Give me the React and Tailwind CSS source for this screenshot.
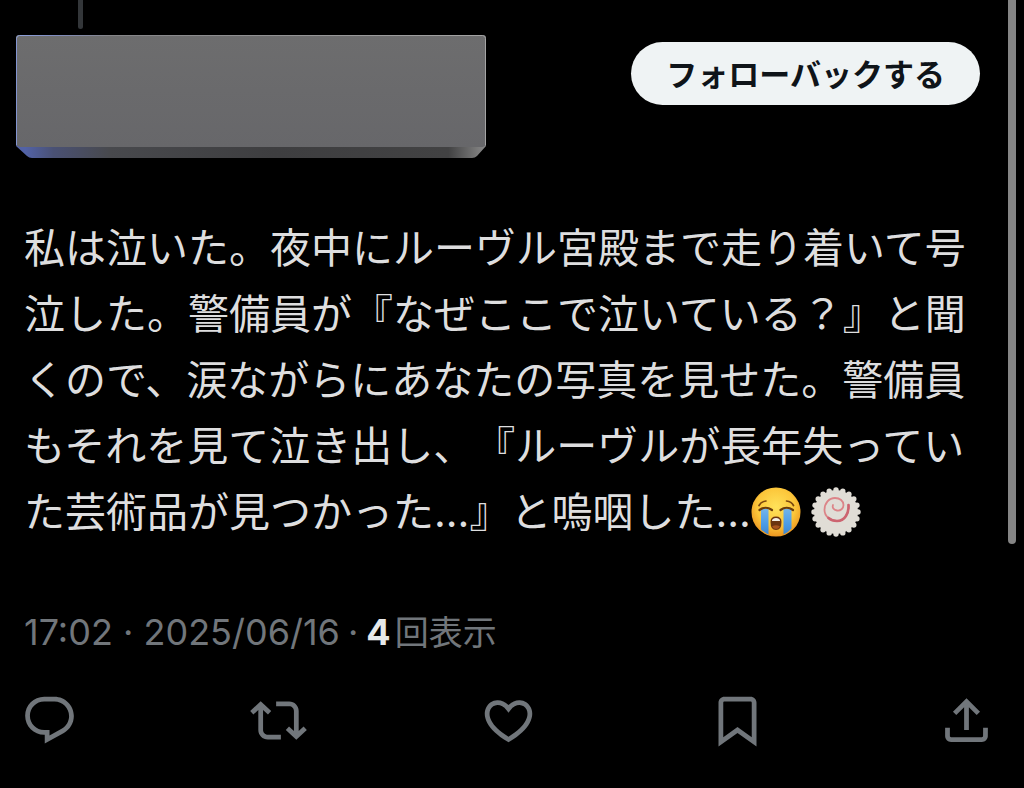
const FONT = "font-['Inter','Noto_Sans_CJK_JP',sans-serif]"

const BODY = '私は泣いた。夜中にルーヴル宮殿まで走り着いて号泣した。警備員が『なぜここで泣いている？』と聞くので、涙ながらにあなたの写真を見せた。警備員もそれを見て泣き出し、『ルーヴルが長年失っていた芸術品が見つかった...』と嗚咽した...'

const ACTIONS = [
  { label: '返信', d: 'M1.751 10c0-4.42 3.584-8 8.005-8h4.366c4.49 0 8.129 3.64 8.129 8.13 0 2.96-1.607 5.68-4.196 7.11l-8.054 4.46v-3.69h-.067c-4.49.1-8.183-3.51-8.183-8.01zm8.005-6c-3.317 0-6.005 2.69-6.005 6 0 3.37 2.77 6.08 6.138 6.01l.351-.01h1.761v2.3l5.087-2.81c1.951-1.08 3.163-3.13 3.163-5.36 0-3.39-2.744-6.13-6.129-6.13H9.756z' },
  { label: 'リポスト', d: 'M4.5 3.88l4.432 4.14-1.364 1.46L5.5 7.55V16c0 1.1.896 2 2 2H13v2H7.5c-2.209 0-4-1.79-4-4V7.55L1.432 9.48.068 8.02 4.5 3.88zM16.5 6H11V4h5.5c2.209 0 4 1.79 4 4v8.45l2.068-1.93 1.364 1.46-4.432 4.14-4.432-4.14 1.364-1.46 2.068 1.93V8c0-1.1-.896-2-2-2z' },
  { label: 'いいね', d: 'M16.697 5.5c-1.222-.06-2.679.51-3.89 2.16l-.805 1.09-.806-1.09C9.984 6.01 8.526 5.44 7.304 5.5c-1.243.07-2.349.78-2.91 1.91-.552 1.12-.633 2.78.479 4.82 1.074 1.97 3.257 4.27 7.129 6.61 3.87-2.34 6.052-4.64 7.126-6.61 1.111-2.04 1.03-3.7.477-4.82-.561-1.13-1.666-1.84-2.908-1.91zm4.187 7.69c-1.351 2.48-4.001 5.12-8.379 7.67l-.503.3-.504-.3c-4.379-2.55-7.029-5.19-8.382-7.67-1.36-2.5-1.41-4.86-.514-6.67.887-1.79 2.647-2.91 4.601-3.01 1.651-.09 3.368.56 4.798 2.01 1.429-1.45 3.146-2.1 4.796-2.01 1.954.1 3.714 1.22 4.601 3.01.896 1.81.846 4.17-.514 6.67z' },
  { label: 'ブックマーク', d: 'M4 4.5C4 3.12 5.119 2 6.5 2h11C18.881 2 20 3.12 20 4.5v18.44l-8-5.71-8 5.71V4.5zM6.5 4c-.276 0-.5.22-.5.5v14.56l6-4.29 6 4.29V4.5c0-.28-.224-.5-.5-.5h-11z' },
  { label: '共有', d: 'M12 2.59l5.7 5.7-1.41 1.42L13 6.41V16h-2V6.41l-3.3 3.3-1.41-1.42L12 2.59zM21 15l-.02 3.51c0 1.38-1.12 2.49-2.5 2.49H5.5C4.11 21 3 19.88 3 18.5V15h2v3.5c0 .28.22.5.5.5h12.98c.28 0 .5-.22.5-.5L19 15h2z' },
]

// アカウント名を隠している立体ブロック
function HiddenAccount() {
  return (
    <svg viewBox="0 0 470 124" className="h-[124px] w-[470px]" aria-hidden="true">
      <defs>
        <linearGradient id="face" x1="0" y1="0" x2="0" y2="1">
          <stop offset="0" stopColor="#6d6d6e" />
          <stop offset="1" stopColor="#67676a" />
        </linearGradient>
        <linearGradient id="lip" x1="0" y1="0" x2="1" y2="0">
          <stop offset="0.02" stopColor="#5262a6" />
          <stop offset="0.08" stopColor="#4a5174" />
          <stop offset="0.2" stopColor="#48494d" />
          <stop offset="0.55" stopColor="#3e3e40" />
          <stop offset="0.92" stopColor="#424243" />
          <stop offset="1" stopColor="#8a8a8a" />
        </linearGradient>
        <linearGradient id="edge" x1="0" y1="0" x2="1" y2="0">
          <stop offset="0" stopColor="#8fa3dc" />
          <stop offset="0.08" stopColor="#7f8cc0" />
          <stop offset="0.2" stopColor="#858588" />
          <stop offset="1" stopColor="#a4a4a4" />
        </linearGradient>
      </defs>
      <path d="M0 108h470v3l-9 10q-2 2-5 2H16q-3 0-5-2L0 111z" fill="url(#lip)" />
      <path d="M3 0h464q3 0 3 3v107l-3 2H4l-4-2V3q0-3 3-3z" fill="url(#face)" />
      <path d="M.5 110V3.5q0-3 3-3h463q3 0 3 3V110" fill="none" stroke="url(#edge)" />
      <path d="M.5 110V4" fill="none" stroke="#8294d0" />
    </svg>
  )
}

function CryingFace() {
  return (
    <svg viewBox="0 0 50 50" className="inline-block size-[50px] align-[-10px]" role="img" aria-label="😭">
      <defs>
        <radialGradient id="skin" cx="0.5" cy="0.4" r="0.6">
          <stop offset="0" stopColor="#ffe25a" />
          <stop offset="0.65" stopColor="#fcc63a" />
          <stop offset="1" stopColor="#ec9620" />
        </radialGradient>
        <linearGradient id="tear" x1="0" y1="0" x2="0" y2="1">
          <stop offset="0" stopColor="#72b4ea" />
          <stop offset="0.6" stopColor="#4a9be6" />
          <stop offset="1" stopColor="#3f86cf" />
        </linearGradient>
      </defs>
      <circle cx="25" cy="25" r="24.5" fill="url(#skin)" />
      <path d="M10 22h7.500v25.500q-4-2-7.500-5zM32.500 22h8v19.500q-3.500 4-8 6z" fill="url(#tear)" />
      <path d="M8 18.500q2-4 7-4.500M42.500 18.500q-2-4-7-4.500" fill="none" stroke="#7a470f" strokeWidth="1.700" strokeLinecap="round" />
      <path d="M8.500 23q6-4.500 12.500 0M29.500 23q6-4.500 12.500 0" fill="none" stroke="#6b3d0c" strokeWidth="2.200" strokeLinecap="round" />
      <path d="M19.500 35q0-5.500 5.500-5.500t5.500 5.500q0 8-5.500 8t-5.500-8z" fill="#6b3410" />
      <path d="M21 33.500q.5-2.500 4-2.500t4 2.500v.5h-8z" fill="#f4efe6" />
      <path d="M21 39.500q4-2.500 8 0-1.500 2.500-4 2.500t-4-2.500z" fill="#a8541e" />
    </svg>
  )
}

function FishCake() {
  const bumps = Array.from({ length: 20 }, (_, i) => (i * Math.PI) / 10)
  return (
    <svg viewBox="0 0 50 50" className="ml-[10px] inline-block size-[50px] align-[-10px]" role="img" aria-label="🍥">
      <g fill="#e0ddd6">
        <circle cx="25" cy="25" r="22" />
        {bumps.map((a) => (
          <circle key={a} cx={25 + 22 * Math.cos(a)} cy={25 + 22 * Math.sin(a)} r="2.7" />
        ))}
      </g>
      <g fill="none" strokeLinecap="round" strokeLinejoin="round">
        <path
          d="M37.500 18C38 26 34 34 26 34C19 34 13.500 29 13.500 23C13.500 16 18 11 24 11C29 11 32.500 14 32.500 18C32.500 21.500 29.500 24 26 23.500C22.500 23 21 20.500 22 18"
          stroke="#dc8488"
          strokeWidth="1.800"
        />
        <path d="M37.500 18C38 26 34 34 26 34Q21 34 17.500 31" stroke="#cc6470" strokeWidth="2.600" />
      </g>
    </svg>
  )
}

export default function App() {
  return (
    <main className={`relative min-h-screen overflow-hidden bg-black ${FONT}`} lang="ja">
      {/* スレッドの接続線 */}
      <div className="ml-[78px] h-[29px] w-[5px] rounded-b-full bg-[#333639]" />

      <header className="mt-[6px] flex items-start justify-between pr-11 pl-4">
        <HiddenAccount />
        <button type="button" className="mt-[7px] rounded-full bg-[#eff3f4] px-[35px] pt-[2px] text-[31px] leading-[61px] font-bold text-[#0f1419]">
          フォローバックする
        </button>
      </header>

      <p className="mt-[56px] pr-10 pl-6 text-[41px] leading-[66px] text-[#dededf] [text-spacing-trim:space-all]">
        {BODY}
        <CryingFace />
        <FishCake />
      </p>

      <div className="mt-[54px] flex items-baseline px-6 text-[36px] leading-[66px] text-[#71767b]">
        <time dateTime="2025-06-16T17:02">17:02 · 2025/06/16</time>
        <span className="mx-2">·</span>
        <span className="font-bold text-[#e7e9ea]">4</span>
        <span className="ml-1 text-[34px]">回表示</span>
      </div>

      <div className="mt-[26px] flex justify-between pr-[29px] pl-[21px]">
        {ACTIONS.map((a) => (
          <button key={a.label} type="button" aria-label={a.label} className="text-[#71767b]">
            <svg viewBox="0 0 24 24" className="size-[57px]" fill="currentColor" aria-hidden="true">
              <path d={a.d} />
            </svg>
          </button>
        ))}
      </div>

      {/* スクロールバー */}
      <div className="absolute top-0 right-2 h-[544px] w-2 rounded-b-full bg-[#858585]" />
    </main>
  )
}
